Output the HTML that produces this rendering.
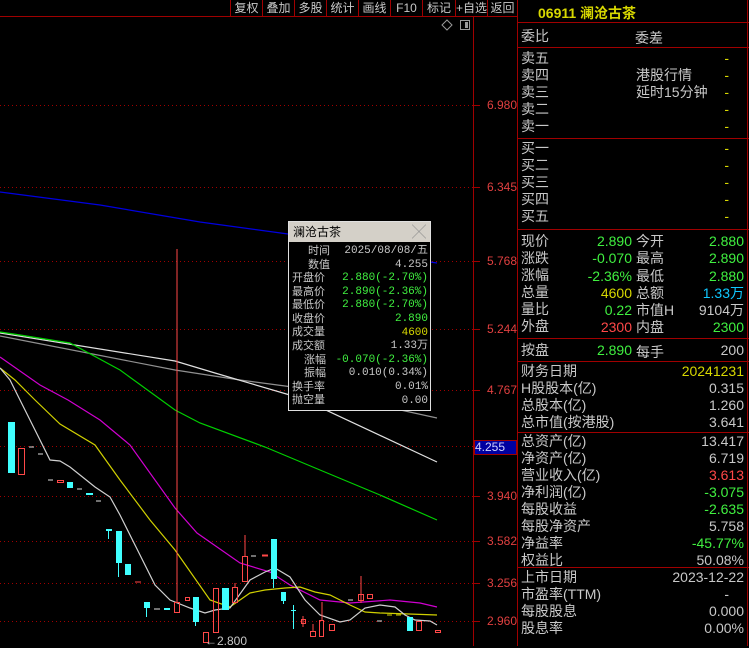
<!DOCTYPE html>
<html><head><meta charset="utf-8"><style>
*{margin:0;padding:0;box-sizing:border-box}
body{width:749px;height:646px;background:#000;overflow:hidden;position:relative;font-family:"Liberation Sans","Noto Sans CJK SC",sans-serif;color:#c8c8c8}
.a{position:absolute;white-space:nowrap}
.tb{position:absolute;top:0;height:16px;font-size:12px;color:#c8c8c8;line-height:16px;text-align:center;border-left:1px solid #a00000}
.p{position:absolute;left:521px;font-size:14px;line-height:17px;color:#c8c8c8}
.r{position:absolute;right:5px;font-size:14px;line-height:17px;text-align:right}
.hl{position:absolute;left:517px;width:232px;height:1px;background:#a00000}
.g{color:#40f040}.y{color:#d8d800}.rd{color:#ff4848}.c{color:#10c8ff}
.ax{position:absolute;left:487px;font-size:12px;color:#e04040;line-height:12px}
.pp{position:absolute;font-size:11px;line-height:13.6px}
</style></head><body>
<svg width="749" height="646" style="position:absolute;left:0;top:0">
<line x1="0" y1="16.5" x2="517" y2="16.5" stroke="#a00000"/>
<line x1="473.5" y1="17" x2="473.5" y2="646" stroke="#a00000"/>
<line x1="517.5" y1="0" x2="517.5" y2="646" stroke="#a00000"/>
<line x1="747.5" y1="0" x2="747.5" y2="646" stroke="#a00000"/>
<g stroke="#a00000" stroke-dasharray="1,3">
<line x1="0" y1="105.5" x2="473" y2="105.5"/><line x1="0" y1="187.5" x2="473" y2="187.5"/>
<line x1="0" y1="261.5" x2="473" y2="261.5"/><line x1="0" y1="329.5" x2="473" y2="329.5"/>
<line x1="0" y1="390.5" x2="473" y2="390.5"/><line x1="0" y1="446.5" x2="473" y2="446.5"/>
<line x1="0" y1="496.5" x2="473" y2="496.5"/><line x1="0" y1="541.5" x2="473" y2="541.5"/>
<line x1="0" y1="583.5" x2="473" y2="583.5"/><line x1="0" y1="621.5" x2="473" y2="621.5"/>
</g>
<g stroke="#a00000"><line x1="473" y1="105.5" x2="480" y2="105.5"/><line x1="473" y1="187.5" x2="480" y2="187.5"/><line x1="473" y1="261.5" x2="480" y2="261.5"/><line x1="473" y1="329.5" x2="480" y2="329.5"/><line x1="473" y1="390.5" x2="480" y2="390.5"/><line x1="473" y1="496.5" x2="480" y2="496.5"/><line x1="473" y1="541.5" x2="480" y2="541.5"/><line x1="473" y1="583.5" x2="480" y2="583.5"/><line x1="473" y1="621.5" x2="480" y2="621.5"/></g>
<path d="M447 20 l5 5 -5 5 -5 -5z" fill="none" stroke="#999"/>
<rect x="460.5" y="20.5" width="9" height="9" fill="none" stroke="#999"/><rect x="465" y="22" width="3" height="6" fill="#999"/>
<g fill="none" stroke-width="1.2">
<polyline stroke="#0000e0" points="0,192 100,205 200,222 288,234"/>
<polyline stroke="#0000e0" points="430,262 437,263"/>
<polyline stroke="#909090" points="0,336 175,370 240,380 300,388 437,418"/>
<polyline stroke="#e0e0e0" points="0,333 175,361 215,373 300,398 437,462"/>
<polyline stroke="#00d000" points="0,332 20,335 70,343 120,370 175,410 200,423 265,447 320,470 380,495 437,520"/>
<polyline stroke="#d000d0" points="0,357 40,385 68,400 100,420 130,445 175,508 197,533 240,563 270,572 290,585 320,600 350,603 390,600 420,603 437,607"/>
<polyline stroke="#d0d000" points="0,368 15,380 35,400 60,424 95,445 120,480 150,520 175,550 210,600 230,607 250,593 265,590 285,588 300,587 315,592 330,595 350,605 365,612 380,613 437,615"/>
<polyline stroke="#d0d0d0" points="0,368 10,380 20,400 35,430 50,460 60,461 70,467 80,475 95,487 110,497 120,515 135,545 155,585 170,600 190,608 205,613 215,610 230,608 250,580 265,572 275,568 290,577 305,600 320,615 340,622 350,620 365,608 380,605 395,607 405,615 415,620 430,621 437,625"/>
</g>
<g fill="#40ffff">
<rect x="8" y="422" width="7" height="51"/><rect x="67" y="482" width="6" height="6"/><rect x="86" y="493" width="7" height="2"/>
<rect x="106" y="529" width="6" height="2"/><rect x="108" y="531" width="1" height="8"/>
<rect x="116" y="531" width="6" height="32"/><rect x="118" y="563" width="1" height="14"/>
<rect x="125" y="564" width="6" height="11"/><rect x="144" y="602" width="6" height="6"/><rect x="146" y="608" width="1" height="9"/>
<rect x="164" y="608" width="6" height="2"/><rect x="193" y="597" width="6" height="25"/><rect x="195" y="622" width="1" height="4"/>
<rect x="222" y="588" width="7" height="22"/><rect x="271" y="539" width="6" height="40"/><rect x="273" y="579" width="1" height="9"/>
<rect x="281" y="592" width="5" height="9"/><rect x="283" y="601" width="1" height="3"/>
<rect x="293" y="605" width="1" height="24"/><rect x="291" y="610" width="5" height="1"/>
<rect x="407" y="617" width="6" height="14"/>
</g>
<g fill="none" stroke="#ff4848">
<rect x="18.5" y="448.5" width="6" height="26"/><rect x="57.5" y="480.5" width="6" height="2"/>
<rect x="174.5" y="602.5" width="5" height="10"/><line x1="177" y1="249" x2="177" y2="602"/>
<rect x="185.5" y="597.5" width="4" height="3"/><rect x="213.5" y="588.5" width="5" height="44"/>
<rect x="203.5" y="632.5" width="5" height="10"/><rect x="232.5" y="587.5" width="5" height="15"/><line x1="235" y1="583" x2="235" y2="587"/>
<rect x="242.5" y="556.5" width="5" height="25"/><line x1="245" y1="535" x2="245" y2="556"/>
<rect x="262.5" y="555" width="5" height="1"/><rect x="301.5" y="619.5" width="4" height="4"/><line x1="303" y1="616" x2="303" y2="627"/>
<rect x="310.5" y="631.5" width="5" height="5"/><line x1="313" y1="624" x2="313" y2="631"/>
<rect x="319.5" y="620.5" width="4" height="16"/><line x1="322" y1="602" x2="322" y2="620"/>
<rect x="329.5" y="624.5" width="5" height="6"/><rect x="358.5" y="594.5" width="5" height="6"/><line x1="361" y1="576" x2="361" y2="603"/>
<rect x="367.5" y="594.5" width="5" height="4"/><rect x="416.5" y="621.5" width="5" height="9"/><rect x="435.5" y="630.5" width="5" height="2"/>
<line x1="135" y1="582" x2="141" y2="582"/>
</g>
<g stroke="#e0e0e0"><line x1="29" y1="447" x2="34" y2="447"/><line x1="38" y1="454" x2="43" y2="454"/><line x1="48" y1="480" x2="53" y2="480"/><line x1="77" y1="489" x2="82" y2="489"/><line x1="96" y1="501" x2="101" y2="501"/><line x1="154" y1="609" x2="160" y2="609"/><line x1="251" y1="556" x2="256" y2="556"/><line x1="348" y1="600" x2="353" y2="600"/><line x1="377" y1="621" x2="382" y2="621"/></g>
<g stroke="#d0d000"><line x1="387" y1="615" x2="392" y2="615"/><line x1="396" y1="615" x2="401" y2="615"/></g>
<g stroke="#a00000"><line x1="517" y1="22.5" x2="749" y2="22.5"/></g>
</svg>
<div class="a" style="left:205px;top:634px;font-size:12px;color:#c8c8c8">←2.800</div>
<div class="tb" style="left:230px;width:32px">复权</div><div class="tb" style="left:262px;width:32px">叠加</div><div class="tb" style="left:294px;width:32px">多股</div><div class="tb" style="left:326px;width:32px">统计</div><div class="tb" style="left:358px;width:32px">画线</div><div class="tb" style="left:390px;width:32px">F10</div><div class="tb" style="left:422px;width:33px">标记</div><div class="tb" style="left:455px;width:32px">+自选</div><div class="tb" style="left:487px;width:30px">返回</div>
<div class="ax" style="top:99px">6.980</div><div class="ax" style="top:181px">6.345</div><div class="ax" style="top:255px">5.768</div><div class="ax" style="top:323px">5.244</div><div class="ax" style="top:384px">4.767</div>
<div class="a" style="left:474px;top:440px;width:43px;height:15px;background:#0000a0;border:1px solid #a00000;color:#d0d0ff;font-size:12px;line-height:13px">4.255</div>
<div class="ax" style="top:490px">3.940</div><div class="ax" style="top:535px">3.582</div><div class="ax" style="top:577px">3.256</div><div class="ax" style="top:615px">2.960</div>
<div class="a" style="left:288px;top:221px;width:143px;height:190px;border:1px solid #e0e0e0;background:#000">
<div style="height:20px;background:#d4d0c8;color:#000;font-size:12px;line-height:20px;padding-left:4px">澜沧古茶<span style="position:absolute;right:4px;color:#888;font-size:14px">╳</span></div>
<div class="pp" style="left:3px;top:23px;text-align:right;width:38px">时间<br>数值</div>
<div class="pp" style="left:3px;top:50px;width:38px">开盘价<br>最高价<br>最低价<br>收盘价<br>成交量<br>成交额<br><span style="padding-left:12px">涨幅</span><br><span style="padding-left:12px">振幅</span><br>换手率<br>抛空量</div>
<div class="pp" style="right:2px;top:23px;text-align:right;font-family:'Liberation Mono','Noto Sans CJK SC',monospace">2025/08/08/五<br>4.255<br><span class="g">2.880(-2.70%)</span><br><span class="g">2.890(-2.36%)</span><br><span class="g">2.880(-2.70%)</span><br><span class="g">2.890</span><br><span class="y">4600</span><br>1.33万<br><span class="g">-0.070(-2.36%)</span><br>0.010(0.34%)<br>0.01%<br>0.00</div>
</div>
<div class="a y" style="left:538px;top:3px;font-size:14px;font-weight:bold">06911 澜沧古茶</div>
<div class="p" style="top:28px">委比</div><div class="a" style="left:635px;top:28px;font-size:14px">委差</div>
<div class="hl" style="top:47px"></div>
<div class="p" style="top:50px">卖五<br>卖四<br>卖三<br>卖二<br>卖一</div>
<div class="a" style="left:636px;top:67px;font-size:14px;line-height:17px">港股行情<br>延时15分钟</div>
<div class="r y" style="top:50px;right:20px">-<br>-<br>-<br>-<br>-</div>
<div class="hl" style="top:138px"></div>
<div class="p" style="top:140px">买一<br>买二<br>买三<br>买四<br>买五</div>
<div class="r y" style="top:140px;right:20px">-<br>-<br>-<br>-<br>-</div>
<div class="hl" style="top:229px"></div>
<div class="p" style="top:233px">现价<br>涨跌<br>涨幅<br>总量<br>量比<br>外盘</div>
<div class="a" style="left:560px;width:72px;top:233px;font-size:14px;line-height:17.3px;text-align:right"><span class="g">2.890</span><br><span class="g">-0.070</span><br><span class="g">-2.36%</span><br><span class="y">4600</span><br><span class="g">0.22</span><br><span class="rd">2300</span></div>
<div class="a" style="left:636px;top:233px;font-size:14px;line-height:17.3px">今开<br>最高<br>最低<br>总额<br>市值H<br>内盘</div>
<div class="r" style="top:233px;line-height:17.3px"><span class="g">2.880</span><br><span class="g">2.890</span><br><span class="g">2.880</span><br><span class="c">1.33万</span><br>9104万<br><span class="g">2300</span></div>
<div class="hl" style="top:338px"></div>
<div class="p" style="top:342px">按盘</div><div class="a g" style="left:560px;width:72px;top:342px;font-size:14px;text-align:right">2.890</div><div class="a" style="left:636px;top:342px;font-size:14px">每手</div><div class="r" style="top:342px">200</div>
<div class="hl" style="top:361px"></div>
<div class="p" style="top:363px">财务日期<br>H股股本(亿)<br>总股本(亿)<br>总市值(按港股)</div>
<div class="r" style="top:363px"><span class="y">20241231</span><br>0.315<br>1.260<br>3.641</div>
<div class="hl" style="top:432px"></div>
<div class="p" style="top:433px">总资产(亿)<br>净资产(亿)<br>营业收入(亿)<br>净利润(亿)<br>每股收益<br>每股净资产<br>净益率<br>权益比</div>
<div class="r" style="top:433px">13.417<br>6.719<br><span class="rd">3.613</span><br><span class="g">-3.075</span><br><span class="g">-2.635</span><br>5.758<br><span class="g">-45.77%</span><br>50.08%</div>
<div class="hl" style="top:567px"></div>
<div class="p" style="top:569px">上市日期<br>市盈率(TTM)<br>每股股息<br>股息率</div>
<div class="r" style="top:569px">2023-12-22<br><span style="padding-right:15px">-</span><br>0.000<br>0.00%</div>
</body></html>
